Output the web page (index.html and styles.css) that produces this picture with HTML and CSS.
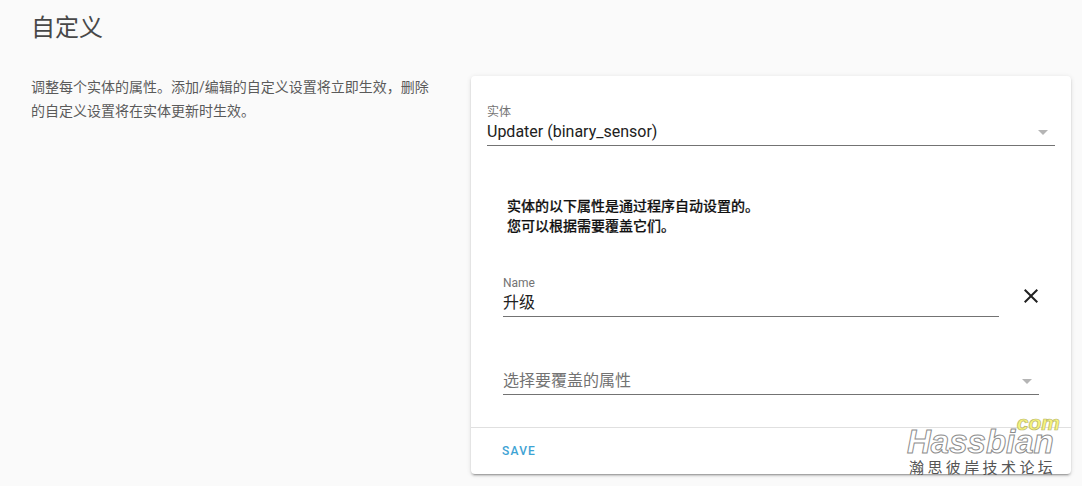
FILE: index.html
```html
<!DOCTYPE html>
<html lang="zh-CN">
<head>
    <meta charset="UTF-8">
    <meta name="viewport" content="width=device-width, initial-scale=1.0">
    <title>自定义</title>
    <link rel="stylesheet" href="styles.css">
</head>
<body>

<div id="container">
    <h1 class="page-title">自定义</h1>
    <div class="columns">
        <p class="intro">调整每个实体的属性。添加/编辑的自定义设置将立即生效，删除的自定义设置将在实体更新时生效。</p>

        <div class="card">
            <div class="card-content">
                <div class="field entity-field">
                    <label class="field-label">实体</label>
                    <div class="field-value">
                        <span>Updater (binary_sensor)</span>
                        <span class="arrow"></span>
                    </div>
                </div>

                <p class="notice">实体的以下属性是通过程序自动设置的。<br>您可以根据需要覆盖它们。</p>

                <div class="name-row">
                    <div class="field name-field">
                        <label class="field-label">Name</label>
                        <div class="field-value"><span>升级</span></div>
                    </div>
                    <svg class="close-icon" viewBox="0 0 24 24" width="24" height="24">
                        <path d="M19 6.41L17.59 5 12 10.59 6.41 5 5 6.41 10.59 12 5 17.59 6.41 19 12 13.41 17.59 19 19 17.59 13.41 12z"/>
                    </svg>
                </div>

                <div class="field add-field">
                    <div class="field-value placeholder">
                        <span>选择要覆盖的属性</span>
                        <span class="arrow"></span>
                    </div>
                </div>
            </div>
            <div class="card-actions">
                <button class="save-button">SAVE</button>
            </div>
        </div>
    </div>
</div>

<div class="watermark">
    <div class="wm-com">com</div>
    <div class="wm-name">Hassbian</div>
    <div class="wm-sub">瀚思彼岸技术论坛</div>
</div>

</body>
</html>
```

FILE: styles.css
```css
html, body {
    height: 100%;
}
body {
    font-family: Roboto, "Noto Sans CJK SC", sans-serif;
    background-color: #fafafa;
    margin: 0;
    overflow: hidden;
    position: relative;
}
#container {
    padding: 0 11px 0 31px;
}
.page-title {
    font-size: 24px;
    font-weight: 400;
    line-height: 32px;
    color: #484848;
    margin: 0;
    padding-top: 12px;
}
.columns {
    display: flex;
    align-items: flex-start;
    margin-top: 32px;
}
.intro {
    width: 410px;
    margin: -1px 30px 0 0;
    font-size: 14px;
    line-height: 24px;
    color: #5a5a5a;
    flex-shrink: 0;
}
.card {
    width: 600px;
    background: #fff;
    border-radius: 4px;
    box-shadow: 0 2px 2px rgba(0,0,0,.14), 0 1px 5px rgba(0,0,0,.12), 0 3px 1px -2px rgba(0,0,0,.2);
}
.card-content {
    padding: 29px 16px 0;
    height: 351px;
    box-sizing: border-box;
}
.field-label {
    display: block;
    font-size: 12px;
    line-height: 15px;
    color: #737373;
}
.name-field .field-label {
    line-height: 16px;
}
.field-value {
    display: flex;
    justify-content: space-between;
    align-items: center;
    font-size: 16px;
    line-height: 24px;
    color: #212121;
    border-bottom: 1px solid #737373;
    padding-bottom: 1px;
}
.placeholder {
    color: #737373;
}
.arrow {
    width: 0;
    height: 0;
    border-left: 5px solid transparent;
    border-right: 5px solid transparent;
    border-top: 5px solid #b5b5b5;
    margin-right: 7px;
}
.notice {
    margin: 50px 0 0;
    padding-left: 20px;
    font-size: 14px;
    font-weight: 500;
    line-height: 20px;
    color: #111;
    -webkit-text-stroke: 0.2px #111;
}
.name-row {
    display: flex;
    align-items: center;
    justify-content: space-between;
    margin: 39px 0 0 16px;
}
.name-field {
    width: 496px;
}
.close-icon {
    fill: #212121;
    margin-right: 12px;
}
.add-field {
    width: 536px;
    margin: 52px 0 0 16px;
}
.card-actions {
    border-top: 1px solid #e0e0e0;
    height: 46px;
    padding: 0 8px;
    display: flex;
    align-items: center;
}
.save-button {
    border: none;
    background: none;
    font-family: Roboto, sans-serif;
    font-size: 12px;
    font-weight: 500;
    letter-spacing: 1.2px;
    color: #3ea3d4;
    padding: 0 23px;
    cursor: pointer;
}
.watermark {
    position: absolute;
    left: 904px;
    top: 414px;
    width: 160px;
    height: 66px;
}
.wm-com {
    position: absolute;
    right: 4px;
    top: 3px;
    font-family: "Liberation Sans", sans-serif;
    font-style: italic;
    font-weight: 700;
    font-size: 21px;
    line-height: 12px;
    color: #f7f47c;
    -webkit-text-stroke: 0.7px #b9b76a;
}
.wm-name {
    position: absolute;
    left: 3px;
    top: 15px;
    font-family: "Liberation Sans", sans-serif;
    font-style: italic;
    font-weight: 700;
    font-size: 33px;
    line-height: 25px;
    color: #fff;
    -webkit-text-stroke: 1px #8d8d8d;
}
.wm-sub {
    position: absolute;
    left: 5px;
    top: 44px;
    font-size: 15px;
    line-height: 20px;
    letter-spacing: 3.4px;
    color: #555;
    white-space: nowrap;
}
```
